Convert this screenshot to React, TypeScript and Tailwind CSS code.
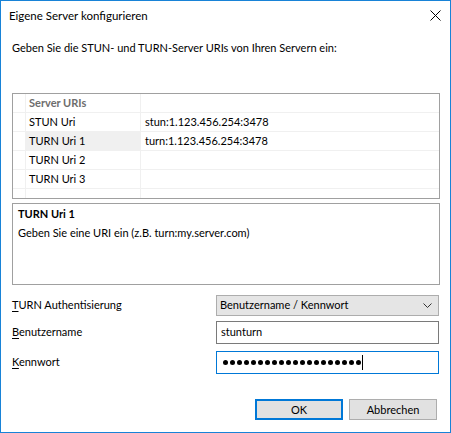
import React from 'react';

const rows = [
  { name: 'STUN Uri', value: 'stun:1.123.456.254:3478', selected: false },
  { name: 'TURN Uri 1', value: 'turn:1.123.456.254:3478', selected: true },
  { name: 'TURN Uri 2', value: '', selected: false },
  { name: 'TURN Uri 3', value: '', selected: false },
];

const AccessLabel: React.FC<{ text: string }> = ({ text }) => (
  <span>
    <span className="underline underline-offset-2">{text[0]}</span>
    {text.slice(1)}
  </span>
);

export default function App() {
  return (
    <div
      className="w-[451px] h-[433px] border border-[#1883d7] bg-white flex flex-col text-[11px] text-black"
      style={{ fontFamily: 'Lato, "Segoe UI", sans-serif' }}
    >
      {/* Title bar */}
      <div className="h-[29px] flex items-center justify-between pl-[8px] pr-[9px]">
        <span className="text-[11.5px] leading-4">Eigene Server konfigurieren</span>
        <svg width="11" height="11" viewBox="0 0 11 11">
          <path d="M0.5 0.5 L10.5 10.5 M10.5 0.5 L0.5 10.5" stroke="#000" strokeWidth="1" />
        </svg>
      </div>

      <div className="flex flex-col px-[11px]">
        <div className="mt-[10px] leading-4 h-4">
          Geben Sie die STUN- und TURN-Server URIs von Ihren Servern ein:
        </div>

        {/* Property grid */}
        <div className="mt-[37px] w-[428px] h-[106px] border border-[#a0a0a0] flex flex-col">
          <div className="flex h-[19px] border-b border-[#f0f0f0]">
            <div className="w-[13px] border-r border-[#f0f0f0]" />
            <div className="w-[115px] border-r border-[#f0f0f0] pl-[3px] font-bold text-[#6d6d6d] leading-[18px]">
              Server URIs
            </div>
            <div className="flex-1" />
          </div>
          {rows.map((r) => (
            <div key={r.name} className="flex h-[19px] border-b border-[#f0f0f0]">
              <div className="w-[13px] border-r border-[#f0f0f0]" />
              <div
                className={`w-[115px] border-r border-[#f0f0f0] pl-[3px] leading-[18px] ${
                  r.selected ? 'bg-[#f0f0f0]' : ''
                }`}
              >
                {r.name}
              </div>
              <div className="flex-1 pl-[4px] leading-[18px]">{r.value}</div>
            </div>
          ))}
          <div className="flex flex-1">
            <div className="w-[13px] border-r border-[#f0f0f0]" />
            <div className="w-[115px] border-r border-[#f0f0f0]" />
          </div>
        </div>

        {/* Help box */}
        <div className="mt-[4px] w-[428px] h-[82px] border border-[#a0a0a0] px-[5px] pt-0 leading-[19px]">
          <div className="font-bold">TURN Uri 1</div>
          <div>Geben Sie eine URI ein (z.B. turn:my.server.com)</div>
        </div>

        {/* Form */}
        <div className="mt-[10px] flex items-center h-[21px]">
          <div className="w-[205px]">
            <AccessLabel text="TURN Authentisierung" />
          </div>
          <div className="w-[224px] h-[21px] bg-[#e5e5e5] border border-[#adadad] flex items-center justify-between pl-[3px] pr-[6px]">
            <span>Benutzername / Kennwort</span>
            <svg width="9" height="5" viewBox="0 0 9 5">
              <path d="M0.5 0.5 L4.5 4.5 L8.5 0.5" stroke="#333" strokeWidth="1" fill="none" />
            </svg>
          </div>
        </div>

        <div className="mt-[5px] flex items-center h-[23px]">
          <div className="w-[205px]">
            <AccessLabel text="Benutzername" />
          </div>
          <div className="w-[224px] h-[23px] border border-[#7a7a7a] flex items-center pl-[4px]">
            stunturn
          </div>
        </div>

        <div className="mt-[7px] flex items-center h-[23px]">
          <div className="w-[205px]">
            <AccessLabel text="Kennwort" />
          </div>
          <div className="w-[224px] h-[23px] border border-[#0078d7] flex items-center pl-[6px]">
            <div className="flex gap-[2px]">
              {Array.from({ length: 20 }).map((_, i) => (
                <span key={i} className="block w-[5px] h-[5px] rounded-full bg-black" />
              ))}
            </div>
            <span className="block w-px h-[15px] bg-black ml-[1px]" />
          </div>
        </div>

        {/* Buttons */}
        <div className="mt-[25px] flex justify-end gap-[6px] pr-[2px]">
          <button className="w-[88px] h-[21px] bg-[#e1e1e1] border-2 border-[#0078d7] leading-none">
            OK
          </button>
          <button className="w-[88px] h-[21px] bg-[#e1e1e1] border border-[#adadad] leading-none">
            Abbrechen
          </button>
        </div>
      </div>
    </div>
  );
}
